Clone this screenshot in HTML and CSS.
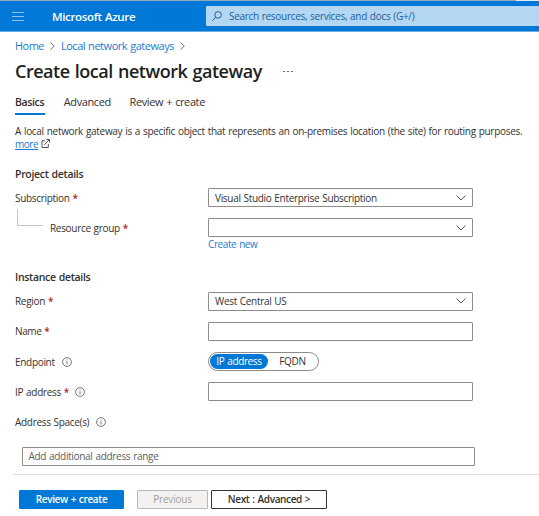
FILE: index.html
```html
<!DOCTYPE html>
<html lang="en">
<head>
<meta charset="utf-8">
<title>Create local network gateway - Microsoft Azure</title>
<link rel="stylesheet" href="styles.css">
</head>
<body>
<svg class="defs" aria-hidden="true">
  <symbol id="chevron" viewBox="0 0 10 6"><path d="M.5 .5 5 5 9.500 .5"/></symbol>
  <symbol id="crumb" viewBox="0 0 5 8"><path d="M.5 .5 4.300 4 .5 7.500"/></symbol>
  <symbol id="info" viewBox="0 0 10 10"><circle cx="5" cy="5" r="4.400"/><path d="M5 4.300V7.400M5 2.500V3.400"/></symbol>
</svg>
<header class="topbar">
  <svg class="menu" viewBox="0 0 12 9"><path d="M0 .5H12M0 4.500H12M0 8.500H12"/></svg>
  <span class="brand">Microsoft Azure</span>
  <div class="search">
    <svg class="lens" viewBox="0 0 10 10"><circle cx="6.100" cy="3.900" r="3.300"/><path d="M3.700 6.300 .4 9.600"/></svg>
    <span>Search resources, services, and docs (G+/)</span>
  </div>
</header>
<main>
  <nav class="crumbs">
    <a class="home">Home</a><svg><use href="#crumb"/></svg><a>Local network gateways</a><svg><use href="#crumb"/></svg>
  </nav>
  <div class="titlebar"><h1>Create local network gateway</h1><span class="dots"><i></i><i></i><i></i></span></div>
  <nav class="tabs"><span class="tab active">Basics</span><span class="tab">Advanced</span><span class="tab">Review + create</span></nav>
  <p class="intro">A local network gateway is a specific object that represents an on-premises location (the site) for routing purposes.<br><a class="more">more</a><svg class="ext" viewBox="0 0 9 9"><path d="M4 1.800H1V8.500H7.300V5M3.200 5.800 8.300 .7M5.500 .5H8.500V3.500"/></svg></p>

  <h2>Project details</h2>
  <div class="row"><label>Subscription <b>*</b></label><div class="field select"><span>Visual Studio Enterprise Subscription</span><svg><use href="#chevron"/></svg></div></div>
  <div class="row group"><label><i class="branch"></i>Resource group <b>*</b></label><div class="field select"><span></span><svg><use href="#chevron"/></svg></div></div>
  <div class="under"><a>Create new</a></div>

  <h2 class="instance">Instance details</h2>
  <div class="row"><label>Region <b>*</b></label><div class="field select"><span>West Central US</span><svg><use href="#chevron"/></svg></div></div>
  <div class="row"><label class="name">Name <b>*</b></label><div class="field"></div></div>
  <div class="row"><label>Endpoint<svg class="info"><use href="#info"/></svg></label><div class="toggle"><span class="on">IP address</span><span class="off">FQDN</span></div></div>
  <div class="row"><label>IP address <b>*</b><svg class="info"><use href="#info"/></svg></label><div class="field"></div></div>
  <div class="row"><label>Address Space(s)<svg class="info"><use href="#info"/></svg></label></div>
  <div class="field range">Add additional address range</div>
</main>
<footer>
  <button class="primary">Review + create</button>
  <button class="previous" disabled>Previous</button>
  <button class="next">Next : Advanced &gt;</button>
</footer>
</body>
</html>
```
FILE: styles.css
```css
* { box-sizing: border-box; }
body { margin: 0; height: 516px; overflow: hidden; background: #fff; color: #323130; font: 10px/14px "Open Sans", "Noto Sans", sans-serif; letter-spacing: -.31px; word-spacing: .6px; }
svg { fill: none; stroke: #555; stroke-width: 1; flex: none; }
.defs { position: absolute; width: 0; height: 0; }
a { color: #1b7bd0; }
h1, h2, p { margin: 0; }

.topbar { height: 32px; display: flex; align-items: center; background: linear-gradient(#8fa9bd, #8fa9bd) 0 0 / 516px 1px no-repeat, linear-gradient(#e4eaef, #e4eaef) 516px 0 / 23px 1px no-repeat, #0078d7; border-bottom: 1px solid #65aee8; }
.menu { width: 12px; height: 9px; margin-left: 12px; margin-top: 1px; stroke: #8cc4f0; }
.brand { width: 182px; padding-left: 28px; margin-top: 2px; color: #fff; font-size: 11.5px; font-weight: 600; letter-spacing: -.35px; white-space: nowrap; }
.search { flex: 1; height: 20px; display: flex; align-items: center; margin-top: 1px; background: #b3d7f3; color: #1e5f9b; border-radius: 1px 0 0 1px; letter-spacing: -.3px; word-spacing: .6px; }
.search span { margin-top: -1px; }
.lens { width: 10px; height: 10px; margin: 0 7px 0 6px; stroke: #1e5f9b; }

main { padding-left: 15px; }
.crumbs { height: 28px; display: flex; align-items: center; font-size: 11px; letter-spacing: -.46px; }
.crumbs .home { letter-spacing: -.55px; }
.crumbs svg { width: 5px; height: 8px; margin: 0 6px; stroke: #777; }
.titlebar { height: 22px; display: flex; align-items: center; }
h1 { font-size: 18px; line-height: 22px; font-weight: 600; color: #201f1e; letter-spacing: -.48px; word-spacing: 1px; }
.dots { display: flex; gap: 2px; margin: 1px 0 0 21px; }
.dots i { width: 2px; height: 1px; background: #666; }
.tabs { display: flex; gap: 18.8px; height: 33px; padding-top: 10px; font-size: 11px; letter-spacing: -.4px; }
.tab { height: 23px; line-height: 19px; }
.tab.active { width: 30px; font-size: 10.5px; font-weight: 600; letter-spacing: -.37px; line-height: 20px; border-bottom: 2px solid #0078d7; }
.intro { margin-top: 10px; line-height: 13px; letter-spacing: -.3px; word-spacing: .6px; white-space: nowrap; }
.more { text-decoration: underline; letter-spacing: -.45px; }
.ext { width: 9px; height: 9px; margin-left: 3px; vertical-align: 0; }
h2 { height: 14px; margin: 16px 0 7px; font-size: 10.5px; line-height: 14px; font-weight: 600; letter-spacing: -.31px; }
h2.instance { margin: 19px 0 7.6px; }

.row { height: 19px; margin-bottom: 11.2px; display: grid; grid-template-columns: 193px 265px; align-items: center; }
label { display: flex; align-items: center; letter-spacing: -.31px; white-space: pre; }
label b { color: #a4262c; font-size: 10px; font-weight: 600; }
.name { letter-spacing: -.4px; }
.group { margin-bottom: 0; }
.branch { width: 26px; height: 17px; margin: -20px 7px 0 2px; border: solid #c4c4c4; border-width: 0 0 1px 1px; }
.field { height: 19px; border: 1px solid #8d8c8b; border-radius: 1px; background: #fff; }
.select { display: flex; align-items: center; justify-content: space-between; padding: 0 6px; }
.select svg { width: 10px; height: 6px; }
.under { height: 14px; padding-left: 193px; letter-spacing: -.4px; }
.info { width: 10px; height: 10px; margin-left: 7px; stroke-width: .8; }
b + .info { margin-left: 6px; }
.toggle { width: 111px; height: 19px; padding: 1px; display: flex; border: 1px solid #8d8c8b; border-radius: 10px; line-height: 15px; }
.toggle span { text-align: center; }
.on { width: 58px; border-radius: 8px; background: #0078d7; color: #fff; letter-spacing: -.37px; }
.off { width: 49px; }
.range { width: 453px; margin: 15px 0 0 7px; padding-left: 5.5px; line-height: 16px; color: #605e5c; }

footer { display: flex; height: 42px; margin: 8px 0 0 13px; padding: 15px 0 0 6px; border-top: 1px solid #dcdcdc; }
button { height: 19px; padding: 0; font: 600 10px/16px "Open Sans", "Noto Sans", sans-serif; letter-spacing: -.35px; word-spacing: .6px; border: 1px solid #323130; border-radius: 1px; background: #fff; color: #323130; }
.primary { width: 105px; background: #0078d7; border-color: #0078d7; color: #fff; }
.previous { width: 71px; margin: 0 3px 0 13px; font-weight: 400; letter-spacing: -.22px; background: #f3f2f1; border-color: #b9b8b7; color: #a19f9d; }
.next { width: 116px; }
```
